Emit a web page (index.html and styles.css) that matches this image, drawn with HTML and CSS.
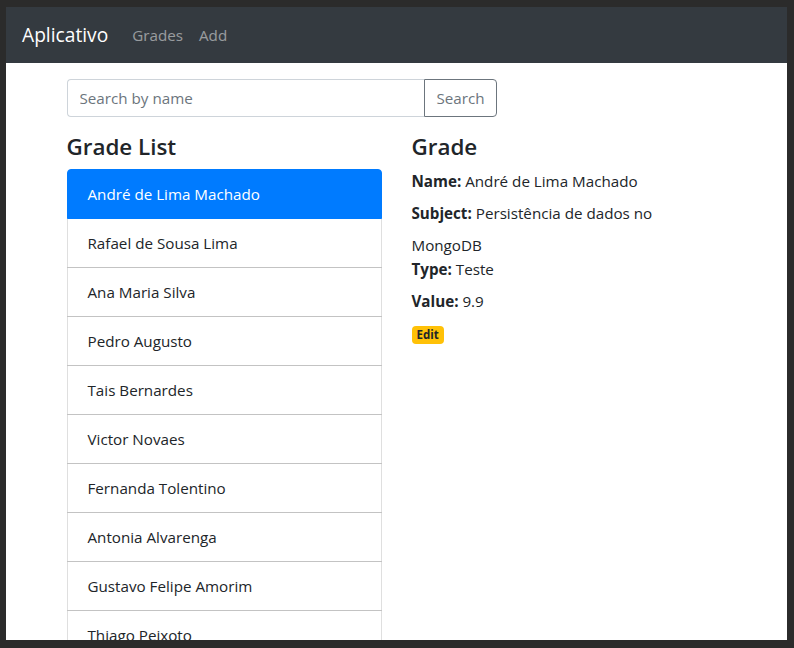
FILE: index.html
```html
<!DOCTYPE html>
<html>
<head>
<meta charset="utf-8">
<link rel="stylesheet" href="styles.css">
</head>
<body>
<div class="frame">
  <nav class="navbar">
    <span class="brand">Aplicativo</span>
    <a class="nav-link">Grades</a>
    <a class="nav-link">Add</a>
  </nav>
  <div class="container">
    <div class="search-row">
      <div class="input-group">
        <input class="form-control" type="text" placeholder="Search by name">
        <button class="btn-search">Search</button>
      </div>
    </div>
    <div class="row">
      <div class="col">
        <h4>Grade List</h4>
        <ul class="list-group">
          <li class="item active">André de Lima Machado</li>
          <li class="item">Rafael de Sousa Lima</li>
          <li class="item">Ana Maria Silva</li>
          <li class="item">Pedro Augusto</li>
          <li class="item">Tais Bernardes</li>
          <li class="item">Victor Novaes</li>
          <li class="item">Fernanda Tolentino</li>
          <li class="item">Antonia Alvarenga</li>
          <li class="item">Gustavo Felipe Amorim</li>
          <li class="item">Thiago Peixoto</li>
        </ul>
      </div>
      <div class="col">
        <h4>Grade</h4>
        <div class="details">
          <div class="field"><label><strong>Name:</strong></label> André de Lima Machado</div>
          <div class="field"><label><strong>Subject:</strong></label> Persistência de dados no MongoDB</div>
          <div class="field"><label><strong>Type:</strong></label> Teste</div>
          <div class="field"><label><strong>Value:</strong></label> 9.9</div>
        </div>
        <a class="badge">Edit</a>
      </div>
    </div>
  </div>
</div>
</body>
</html>
```
FILE: styles.css
```css
* { box-sizing: border-box; }
html, body { margin: 0; padding: 0; }
body {
  background: #2b2b2b;
  padding: 7px 7px 8px 6px;
  font-family: "Open Sans", "Noto Sans", sans-serif;
  font-size: 15.2px;
  line-height: 24px;
  color: #212529;
}
.frame {
  background: #fff;
  height: 633px;
  overflow: hidden;
}
.navbar {
  background: #343a40;
  height: 56px;
  padding: 8px 16px;
  display: flex;
  align-items: center;
}
.brand {
  color: #fff;
  font-size: 19.2px;
  line-height: 30px;
  padding: 5px 0;
  margin-right: 16px;
}
.nav-link {
  color: rgba(255,255,255,.5);
  padding: 8px;
  font-size: 15.2px;
}
.container {
  width: 720px;
  margin: 0 auto;
  padding: 16px 15px 0;
}
.search-row {
  padding: 0 15px;
  margin-bottom: 15px;
}
.input-group {
  display: flex;
  width: 430px;
  height: 38px;
}
.form-control {
  flex: 1;
  min-width: 0;
  border: 1px solid #ced4da;
  border-right: 0;
  border-radius: 4px 0 0 4px;
  padding: 6px 12px;
  font-family: inherit;
  font-size: 15.2px;
  color: #495057;
  outline: none;
}
.form-control::placeholder { color: #6c757d; opacity: 1; }
.btn-search {
  border: 1px solid #6c757d;
  background: #fff;
  color: #6c757d;
  border-radius: 0 4px 4px 0;
  padding: 6px 12px;
  font-family: inherit;
  font-size: 15.2px;
  line-height: 24px;
  width: 73px;
}
.row {
  display: flex;
}
.col {
  width: 345px;
  padding: 0 15px;
}
h4 {
  margin: 0 0 8px;
  padding-top: 1px;
  font-size: 22.4px;
  line-height: 28px;
  font-weight: 600;
}
.list-group {
  list-style: none;
  margin: 0;
  padding: 0;
}
.item {
  padding: 12px 20px;
  border: 1px solid rgba(0,0,0,.125);
  margin-top: -1px;
  line-height: 24px;
}
.item:first-child {
  margin-top: 0;
  border-radius: 4px 4px 0 0;
}
.item.active {
  background: #007bff;
  border-color: #007bff;
  color: #fff;
  position: relative;
  z-index: 1;
}
.details {
  max-width: 260px;
}
.field label {
  display: inline-block;
  margin-bottom: 8px;
}
.field strong { font-weight: 700; }
.badge {
  display: inline-block;
  margin-top: 5px;
  background: #ffc107;
  color: #212529;
  font-size: 11.5px;
  font-weight: 700;
  line-height: 12px;
  padding: 3px 5px;
  border-radius: 4px;
}
```
